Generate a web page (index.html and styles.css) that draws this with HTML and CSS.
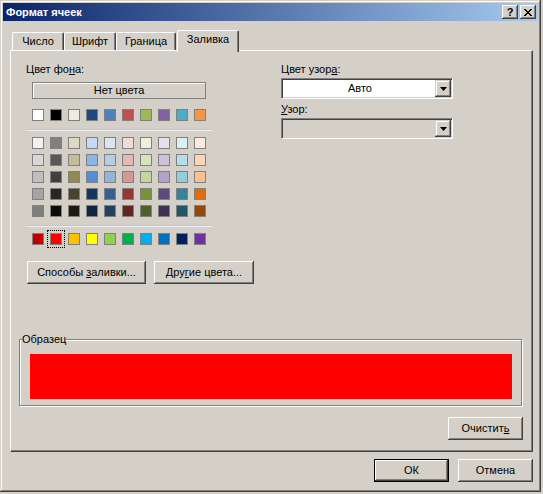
FILE: index.html
```html
<!DOCTYPE html>
<html lang="ru">
  <head>
    <meta charset="UTF-8" />
    <title>Формат ячеек</title>
    <link rel="stylesheet" href="styles.css">
  </head>
  <body>
    <div class="window">
      <div class="titlebar">
        <span class="title">Формат ячеек</span>
        <div class="caption-btns">
          <div class="cap-btn help">?</div>
          <div class="cap-btn">
            <svg width="8" height="7" viewBox="0 0 8 7"><path d="M0 0h2v1h1v1h2V1h1V0h2v1H7v1H6v1H5v1h1v1h1v1h1v1H6V6H5V5H3v1H2v1H0V6h1V5h1V4h1V3H2V2H1V1H0z" fill="#000"/></svg>
          </div>
        </div>
      </div>

      <div class="content">
        <div class="tabs">
          <div class="tab t1">Число</div>
          <div class="tab t2">Шрифт</div>
          <div class="tab t3">Граница</div>
          <div class="tab active">Заливка</div>
        </div>

        <div class="panel">
          <div class="top">
            <div class="bg-col">
              <div class="label">Цвет фо<u>н</u>а:</div>
              <div class="no-color">Нет цвета</div>
              <div class="palette" id="palette"></div>
              <div class="btn-row">
                <div class="btn wide">Способы <u>з</u>аливки...</div>
                <div class="btn other">Дру<u>г</u>ие цвета...</div>
              </div>
            </div>
            <div class="pattern-col">
              <div class="label">Цвет узор<u>а</u>:</div>
              <div class="combo white">
                <span class="combo-text">Авто</span>
                <span class="drop"><svg width="7" height="4" viewBox="0 0 7 4"><path d="M0 0h7L3.5 4z" fill="#000"/></svg></span>
              </div>
              <div class="label second"><u>У</u>зор:</div>
              <div class="combo">
                <span class="combo-text"></span>
                <span class="drop"><svg width="7" height="4" viewBox="0 0 7 4"><path d="M0 0h7L3.5 4z" fill="#000"/></svg></span>
              </div>
            </div>
          </div>

          <fieldset class="sample">
            <legend>Образец</legend>
            <div class="sample-fill"></div>
          </fieldset>

          <div class="clear-row">
            <div class="btn">Очистит<u>ь</u></div>
          </div>
        </div>

        <div class="footer">
          <div class="btn default">ОК</div>
          <div class="btn">Отмена</div>
        </div>
      </div>
    </div>

    <script>
      let palette = document.getElementById("palette");

      let themeRow = ["#ffffff", "#000000", "#eeece1", "#1f497d", "#4f81bd", "#c0504d", "#9bbb59", "#8064a2", "#4bacc6", "#f79646"];
      let shades = [
        ["#f2f2f2", "#7f7f7f", "#ddd9c3", "#c6d9f0", "#dbe5f1", "#f2dcdb", "#ebf1dd", "#e5e0ec", "#dbeef3", "#fdeada"],
        ["#d8d8d8", "#595959", "#c4bd97", "#8db3e2", "#b8cce4", "#e5b9b7", "#d7e3bc", "#ccc1d9", "#b7dde8", "#fbd5b5"],
        ["#bfbfbf", "#3f3f3f", "#938953", "#548dd4", "#95b3d7", "#d99694", "#c3d69b", "#b2a2c7", "#92cddc", "#fac08f"],
        ["#a5a5a5", "#262626", "#494429", "#17365d", "#366092", "#953734", "#76923c", "#5f497a", "#31859b", "#e36c09"],
        ["#7f7f7f", "#0c0c0c", "#1d1b10", "#0f243e", "#244061", "#632423", "#4f6128", "#3f3151", "#205867", "#974806"]
      ];
      let standard = ["#c00000", "#ff0000", "#ffc000", "#ffff00", "#92d050", "#00b050", "#00b0f0", "#0070c0", "#002060", "#7030a0"];

      function addRow(colors, group, selected) {
        let row = document.createElement("div");
        row.className = "swatch-row";
        colors.forEach((color, i) => {
          let sw = document.createElement("div");
          sw.className = i === selected ? "swatch selected" : "swatch";
          sw.style.background = color;
          row.appendChild(sw);
        });
        group.appendChild(row);
      }

      function addGroup(rows, selected) {
        let group = document.createElement("div");
        group.className = "swatch-group";
        rows.forEach((colors) => addRow(colors, group, selected));
        palette.appendChild(group);
      }

      function addSeparator() {
        let sep = document.createElement("div");
        sep.className = "sep";
        palette.appendChild(sep);
      }

      addGroup([themeRow], -1);
      addSeparator();
      addGroup(shades, -1);
      addSeparator();
      addGroup([standard], 1);
    </script>
  </body>
</html>
```

FILE: styles.css
```css
* {
  box-sizing: border-box;
}

body {
  margin: 0;
  background: #d4d0c8;
  font-family: "Liberation Sans", Arial, sans-serif;
  font-size: 11px;
  color: #000;
}

u {
  text-decoration: underline;
  text-underline-offset: 1px;
}

.window {
  width: 541px;
  height: 492px;
  padding: 3px;
  background: #d4d0c8;
  box-shadow: inset -1px -1px #404040, inset 1px 1px #d4d0c8,
    inset -2px -2px #808080, inset 2px 2px #fff;
}

/* title bar */

.titlebar {
  height: 18px;
  display: flex;
  align-items: center;
  justify-content: space-between;
  padding: 0 2px 0 3px;
  background: linear-gradient(to right, #0a246a, #a6caf0);
}

.title {
  color: #fff;
  font-weight: bold;
  font-size: 11px;
}

.caption-btns {
  display: flex;
  gap: 2px;
}

.cap-btn {
  width: 16px;
  height: 14px;
  display: flex;
  align-items: center;
  justify-content: center;
  background: #d4d0c8;
  box-shadow: inset -1px -1px #404040, inset 1px 1px #fff,
    inset -2px -2px #808080, inset 2px 2px #d4d0c8;
}

.cap-btn.help {
  font-weight: bold;
  font-size: 11px;
  line-height: 14px;
  padding-bottom: 1px;
}

/* tabs */

.content {
  padding: 9px 5px 0 7px;
}

.tabs {
  height: 20px;
  display: flex;
  align-items: flex-end;
  padding-left: 2px;
}

.tab {
  height: 18px;
  line-height: 16px;
  text-align: center;
  border-top: 1px solid #fff;
  border-left: 1px solid #fff;
  border-right: 1px solid #404040;
  border-radius: 2px 2px 0 0;
  box-shadow: inset -1px 0 #808080;
}

.t1 { width: 52px; }
.t2 { width: 52px; }
.t3 { width: 60px; }

.tab.active {
  width: 62px;
  height: 22px;
  line-height: 17px;
  margin-left: 1px;
  margin-bottom: -2px;
  position: relative;
  z-index: 1;
  background: #d4d0c8;
}

/* tab page */

.panel {
  height: 402px;
  border-top: 1px solid #fff;
  border-left: 1px solid #fff;
  border-right: 1px solid #404040;
  border-bottom: 1px solid #404040;
  box-shadow: inset -1px -1px #808080;
}

.top {
  display: grid;
  grid-template-columns: 255px 172px;
  padding: 12px 0 0 15px;
}

.label {
  line-height: 13px;
}

.no-color {
  width: 174px;
  height: 17px;
  margin: 6px 0 0 6px;
  line-height: 15px;
  text-align: center;
  border: 1px solid #808080;
  box-shadow: inset 1px 1px #fff;
}

.palette {
  margin-top: 10px;
}

.swatch-group {
  display: flex;
  flex-direction: column;
  gap: 5px;
  padding-left: 6px;
}

.swatch-row {
  display: flex;
  gap: 6px;
}

.swatch {
  width: 12px;
  height: 12px;
  border: 1px solid #808080;
}

.swatch.selected {
  outline: 1px dotted #000;
  outline-offset: 2px;
}

.sep {
  width: 185px;
  height: 2px;
  margin: 8px 0 6px 1px;
  border-top: 1px solid #b5c6de;
  border-bottom: 1px solid #eef2f8;
}

.btn-row {
  display: flex;
  gap: 8px;
  margin: 16px 0 0 1px;
}

/* buttons */

.btn {
  width: 75px;
  height: 23px;
  line-height: 22px;
  text-align: center;
  background: #d4d0c8;
  box-shadow: inset -1px -1px #404040, inset 1px 1px #fff,
    inset -2px -2px #808080, inset 2px 2px #d4d0c8;
}

.btn.wide { width: 119px; }
.btn.other { width: 100px; }

.btn.default {
  border: 1px solid #000;
  line-height: 20px;
}

/* combo boxes */

.combo {
  height: 21px;
  margin-top: 2px;
  display: flex;
  padding: 1px;
  border: 1px solid;
  border-color: #808080 #fff #fff #808080;
  box-shadow: inset 1px 1px #404040, inset -1px -1px #d4d0c8;
}

.combo.white {
  background: #fff;
}

.combo-text {
  flex: 1;
  text-align: center;
  line-height: 17px;
  padding-left: 2px;
}

.drop {
  width: 16px;
  height: 17px;
  display: flex;
  align-items: center;
  justify-content: center;
  background: #d4d0c8;
  box-shadow: inset -1px -1px #404040, inset 1px 1px #d4d0c8,
    inset -2px -2px #808080, inset 2px 2px #fff;
}

.label.second {
  margin-top: 4px;
}

/* sample group */

.sample {
  width: 503px;
  margin: 49px 0 0 8px;
  padding: 8px 9px 6px 10px;
  border: 1px solid #808080;
  box-shadow: inset 1px 1px #fff, 1px 1px #fff;
}

.sample legend {
  line-height: 13px;
  padding: 0;
  margin-left: -8px;
  background: #d4d0c8;
}

.sample-fill {
  height: 45px;
  background: #ff0000;
}

.clear-row {
  display: flex;
  justify-content: flex-end;
  margin: 11px 9px 0 0;
}

/* footer */

.footer {
  display: flex;
  justify-content: flex-end;
  gap: 9px;
  margin-top: 7px;
}
```
